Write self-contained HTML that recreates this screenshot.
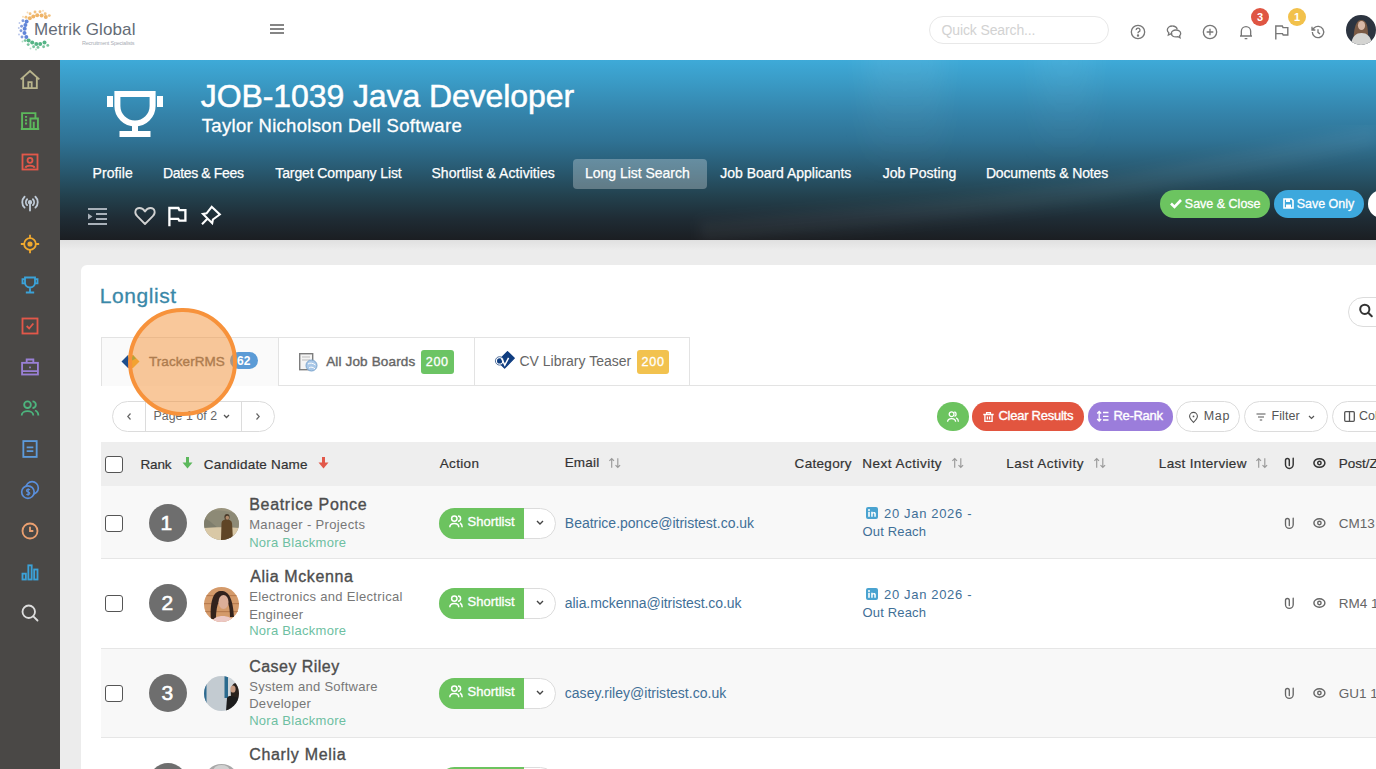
<!DOCTYPE html>
<html><head><meta charset="utf-8">
<style>
*{box-sizing:border-box;margin:0;padding:0}
html,body{width:1376px;height:769px;overflow:hidden;background:#ececec;font-family:"Liberation Sans",sans-serif;position:relative}
.a,.abs{position:absolute}
#side{left:0;top:60px;width:60px;height:709px;background:#4a4846}
.t{position:absolute;white-space:nowrap;line-height:1}
svg{position:absolute;overflow:visible}
</style></head><body>
<div class="a" style="left:0;top:0;width:1376px;height:60px;background:#fff"></div><svg style="left:0;top:0" width="60" height="60" viewBox="0 0 60 60"><circle cx="29.8" cy="18.3" r="2.0" fill="#efb467" opacity="1"/><circle cx="33.3" cy="16.6" r="2.0" fill="#efb467" opacity="1"/><circle cx="37.2" cy="15.3" r="2.0" fill="#efb467" opacity="1"/><circle cx="41.6" cy="15.5" r="2.0" fill="#efb467" opacity="1"/><circle cx="45.8" cy="17.0" r="2.0" fill="#efb467" opacity="1"/><circle cx="30.1" cy="13.7" r="1.45" fill="#f0b86c" opacity="0.85"/><circle cx="35.0" cy="12.0" r="1.45" fill="#f0b86c" opacity="0.85"/><circle cx="40.0" cy="11.7" r="1.45" fill="#f0b86c" opacity="0.85"/><circle cx="45.2" cy="13.8" r="1.45" fill="#f0b86c" opacity="0.85"/><circle cx="49.3" cy="15.6" r="1.45" fill="#f0b86c" opacity="0.85"/><circle cx="26" cy="17.3" r="1.45" fill="#f0b86c" opacity="0.85"/><circle cx="23" cy="16.8" r="0.95" fill="#f0c080" opacity="0.6"/><circle cx="27.5" cy="12.5" r="0.95" fill="#f0c080" opacity="0.6"/><circle cx="43" cy="10.8" r="0.95" fill="#f0c080" opacity="0.6"/><circle cx="26.6" cy="21.4" r="2.0" fill="#5f84d8" opacity="1"/><circle cx="25.4" cy="25.0" r="2.0" fill="#5f84d8" opacity="1"/><circle cx="24.7" cy="28.8" r="2.0" fill="#5f84d8" opacity="1"/><circle cx="24.5" cy="33.0" r="2.0" fill="#5f84d8" opacity="1"/><circle cx="26.3" cy="37.0" r="2.0" fill="#5f84d8" opacity="1"/><circle cx="22.9" cy="20.7" r="1.45" fill="#6a8ad6" opacity="0.85"/><circle cx="21.6" cy="26.2" r="1.45" fill="#6a8ad6" opacity="0.85"/><circle cx="21.0" cy="30.8" r="1.45" fill="#6a8ad6" opacity="0.85"/><circle cx="22.0" cy="37.0" r="1.45" fill="#6a8ad6" opacity="0.85"/><circle cx="18.8" cy="28" r="0.95" fill="#8aa0dc" opacity="0.6"/><circle cx="19" cy="34.5" r="0.95" fill="#8aa0dc" opacity="0.6"/><circle cx="19.5" cy="23" r="0.95" fill="#8aa0dc" opacity="0.6"/><circle cx="28.6" cy="40.4" r="2.0" fill="#55b486" opacity="1"/><circle cx="32.2" cy="42.6" r="2.0" fill="#55b486" opacity="1"/><circle cx="36.3" cy="43.9" r="2.0" fill="#55b486" opacity="1"/><circle cx="40.2" cy="43.9" r="2.0" fill="#55b486" opacity="1"/><circle cx="44.5" cy="42.4" r="2.0" fill="#55b486" opacity="1"/><circle cx="25.2" cy="40.6" r="1.45" fill="#60b88c" opacity="0.85"/><circle cx="28.2" cy="44.6" r="1.45" fill="#60b88c" opacity="0.85"/><circle cx="33.6" cy="46.7" r="1.45" fill="#60b88c" opacity="0.85"/><circle cx="38.0" cy="47.4" r="1.45" fill="#60b88c" opacity="0.85"/><circle cx="43.6" cy="46.7" r="1.45" fill="#60b88c" opacity="0.85"/><circle cx="47.8" cy="45.4" r="1.45" fill="#60b88c" opacity="0.85"/><circle cx="30.5" cy="48.5" r="0.95" fill="#80c8a0" opacity="0.6"/><circle cx="36" cy="49.5" r="0.95" fill="#80c8a0" opacity="0.6"/><circle cx="22.5" cy="41.5" r="0.95" fill="#80c8a0" opacity="0.6"/></svg><div class="t" style="left:33.90px;top:21px;font-size:17px;color:#646b76;letter-spacing:0.117px">Metrik Global</div><div class="t" style="left:82.00px;top:41px;font-size:5.5px;color:#a9aeb5;letter-spacing:-0.227px">Recruitment Specialists</div><div class="a" style="left:270px;top:24px;width:14px;height:2px;background:#858585"></div><div class="a" style="left:270px;top:28px;width:14px;height:2px;background:#858585"></div><div class="a" style="left:270px;top:31.5px;width:14px;height:2px;background:#858585"></div><div class="a" style="left:929px;top:16px;width:180px;height:28px;border:1px solid #e8e8e8;border-radius:14px"></div><div class="t" style="left:941.50px;top:23px;font-size:14px;color:#d2d2d2;letter-spacing:-0.121px">Quick Search...</div><!-- icons -->
  <svg style="left:1130px;top:24px" width="16" height="16" viewBox="0 0 24 24" fill="none" stroke="#777" stroke-width="2"><circle cx="12" cy="12" r="10"/><path d="M9.2 9.2 A2.9 2.9 0 1 1 13 11.9 C12.2 12.4 12 13 12 14"/><circle cx="12" cy="17.3" r="0.8" fill="#777"/></svg>
  <svg style="left:1166px;top:24px" width="16" height="16" viewBox="0 0 24 24" fill="none" stroke="#777" stroke-width="2"><path d="M9.5 3 C5 3 2 5.8 2 9 C2 10.8 2.9 12.2 4.2 13.2 L3.5 16.5 L7 14.8 C7.8 15 8.6 15 9.5 15"/><path d="M15 9 C19 9 22 11.3 22 14.2 C22 15.6 21.4 16.7 20.4 17.6 L21 20.5 L18 19 C17 19.3 16 19.4 15 19.4 C11 19.4 8 17.1 8 14.2 C8 11.3 11 9 15 9 Z"/><path d="M9.5 3 C13 3 16 5 16.8 7.8"/></svg>
  <svg style="left:1202px;top:24px" width="16" height="16" viewBox="0 0 24 24" fill="none" stroke="#777" stroke-width="2"><circle cx="12" cy="12" r="10"/><path d="M12 7 V17 M7 12 H17"/></svg>
  <svg style="left:1238px;top:24px" width="16" height="16" viewBox="0 0 24 24" fill="none" stroke="#777" stroke-width="2"><path d="M5 18 V11 A7 7 0 0 1 19 11 V18 M3 18 H21 M10 22 H14"/></svg>
  <svg style="left:1274px;top:24px" width="16" height="16" viewBox="0 0 16 16" fill="none" stroke="#777" stroke-width="1.4"><path d="M1.8 15.5 V2 H8.3 L9 3.6 H13.8 V11 H9.2 L8.5 9.6 H1.8"/></svg>
  <svg style="left:1310px;top:24px" width="16" height="16" viewBox="0 0 24 24" fill="none" stroke="#777" stroke-width="2"><path d="M3.5 12 A8.5 8.5 0 1 0 6 6 L3 9 M3 4 V9 H8"/><path d="M12 8 V12.5 L15 15"/></svg>
  <div class="abs" style="left:1251px;top:8px;width:18px;height:18px;border-radius:50%;background:#df5543;color:#fff;font-size:11px;font-weight:bold;text-align:center;line-height:18px">3</div>
  <div class="abs" style="left:1288px;top:8px;width:18px;height:18px;border-radius:50%;background:#f2c14b;color:#fff;font-size:11px;font-weight:bold;text-align:center;line-height:18px">1</div>
  <svg style="left:1346px;top:15px" width="30" height="30" viewBox="0 0 30 30"><defs><clipPath id="ha"><circle cx="15" cy="15" r="15"/></clipPath><filter id="hf"><feGaussianBlur stdDeviation="0.5"/></filter></defs><g clip-path="url(#ha)"><rect width="30" height="30" fill="#2c3440"/><g filter="url(#hf)"><path d="M8 30 C7 18 9 5 15 5 C21 5 22 12 22 20 L19 22 L12 22 Z" fill="#7a5a44"/><ellipse cx="15.5" cy="10.5" rx="3.6" ry="4.6" fill="#d8b8a6"/><path d="M5 30 C6 21 10 18 15.5 18 C21 18 25 21 26 30 Z" fill="#d4d4d2"/></g></g></svg>
<!-- SIDEBAR -->
<div id="side" class="abs">
 <svg style="left:20px;top:10px" width="20" height="20" viewBox="0 0 24 24" fill="none" stroke="#b8b48c" stroke-width="2.2" stroke-linejoin="miter"><path d="M0.8 11.2 L12 1.2 L23.2 11.2 M3.8 8.6 V21.8 H20.2 V8.6 M10 21.8 V14.5 H14 V21.8"/></svg>
 <svg style="left:20px;top:51px" width="20" height="20" viewBox="0 0 24 24" fill="none" stroke="#5cb85c" stroke-width="2.3"><path d="M1 21.5 H23 M2.5 21.5 V2.5 H18.5 V9 M12.5 21.5 V9 H21.5 V21.5 M16.5 21.5 V13 M6 7 H8.5 M6 11 H8.5 M6 15 H8.5"/></svg>
 <svg style="left:20px;top:92px" width="20" height="20" viewBox="0 0 24 24" fill="none" stroke="#e2584a" stroke-width="2.2"><rect x="3" y="3" width="18" height="18"/><circle cx="12" cy="10" r="3"/><path d="M6.5 19 C7.5 15.5 16.5 15.5 17.5 19"/></svg>
 <svg style="left:20px;top:133px" width="20" height="20" viewBox="0 0 24 24" fill="none" stroke="#bfcbd8" stroke-width="2.2" stroke-linecap="round"><circle cx="12" cy="11" r="1.5" fill="#bfcbd8"/><path d="M12 13 V21 M8.5 7.5 A5 5 0 0 0 8.5 14.5 M15.5 7.5 A5 5 0 0 1 15.5 14.5 M5.5 4.5 A9 9 0 0 0 5.5 17.5 M18.5 4.5 A9 9 0 0 1 18.5 17.5"/></svg>
 <svg style="left:20px;top:174px" width="20" height="20" viewBox="0 0 24 24" fill="none" stroke="#f0a92e" stroke-width="2.2"><circle cx="12" cy="12" r="7"/><circle cx="12" cy="12" r="2" fill="#f0a92e"/><path d="M12 1 V5 M12 19 V23 M1 12 H5 M19 12 H23"/></svg>
 <svg style="left:20px;top:215px" width="20" height="20" viewBox="0 0 24 24" fill="none" stroke="#3ba2d8" stroke-width="2.2"><path d="M6 3 H18 V9 A6 6 0 0 1 6 9 Z M3 5 H6 V10 H3 Z M18 5 H21 V10 H18 Z M12 15 V20 M7 21 H17"/></svg>
 <svg style="left:20px;top:256px" width="20" height="20" viewBox="0 0 24 24" fill="none" stroke="#e2584a" stroke-width="2.2"><rect x="3" y="3" width="18" height="18"/><path d="M8 12 L11 15 L16 9"/></svg>
 <svg style="left:20px;top:297px" width="20" height="20" viewBox="0 0 24 24" fill="none" stroke="#9a80d6" stroke-width="2.2"><rect x="2.5" y="7" width="19" height="14"/><path d="M8 7 V3 H16 V7 M2.5 17 H21.5"/><rect x="11" y="11.5" width="2" height="2" fill="#9a80d6" stroke="none"/></svg>
 <svg style="left:20px;top:338px" width="20" height="20" viewBox="0 0 24 24" fill="none" stroke="#4db57e" stroke-width="2.2"><circle cx="9" cy="8" r="4"/><path d="M2 21 C2 14 16 14 16 21 M15 4 A4 4 0 0 1 15 12 M18 15 C21 16 22 18 22 21"/></svg>
 <svg style="left:20px;top:379px" width="20" height="20" viewBox="0 0 24 24" fill="none" stroke="#5d9bdc" stroke-width="2.2"><rect x="4" y="2.5" width="16" height="19"/><path d="M8 10 H16 M8 14.5 H16"/></svg>
 <svg style="left:20px;top:420px" width="20" height="20" viewBox="0 0 24 24" fill="none" stroke="#5a8fdc" stroke-width="2"><circle cx="14.5" cy="9.5" r="7.5"/><circle cx="9.5" cy="14.5" r="7.5" fill="#4a4846"/><path d="M11.8 12 C11.3 11 7.8 11 7.8 12.8 C7.8 14.5 11.8 14 11.8 16 C11.8 17.8 8.3 17.8 7.8 16.8 M9.8 10 V19" stroke-width="1.5"/></svg>
 <svg style="left:20px;top:461px" width="20" height="20" viewBox="0 0 24 24" fill="none" stroke="#eba070" stroke-width="2.2"><circle cx="12" cy="12" r="9"/><path d="M12 7 V12 H16"/></svg>
 <svg style="left:20px;top:502px" width="20" height="20" viewBox="0 0 24 24" fill="none" stroke="#3ba2d8" stroke-width="2.2"><rect x="3" y="14" width="4" height="7"/><rect x="10" y="4" width="4" height="17"/><rect x="17" y="9" width="4" height="12"/></svg>
 <svg style="left:20px;top:543px" width="20" height="20" viewBox="0 0 24 24" fill="none" stroke="#dedede" stroke-width="2.2" stroke-linecap="round"><circle cx="10.5" cy="10.5" r="7.5"/><path d="M16 16 L21 21"/></svg>
</div>
<div class="a" style="left:60px;top:60px;width:1316px;height:180px;background:linear-gradient(180deg,#3eaad8 0%,#3a9bc6 12%,#3483aa 30%,#2f7294 45%,#295b73 60%,#23424f 75%,#1f2c35 88%,#1b1e22 100%)"></div><div class="a" style="left:60px;top:60px;width:1316px;height:180px;overflow:hidden"><div class="a" style="left:805px;top:-20px;width:80px;height:140px;filter:blur(14px);background:linear-gradient(180deg,rgba(255,255,255,0.07),rgba(255,255,255,0))"></div><div class="a" style="left:975px;top:-20px;width:60px;height:130px;filter:blur(14px);background:linear-gradient(180deg,rgba(255,255,255,0.06),rgba(255,255,255,0))"></div><svg style="left:0;top:0" width="1316" height="180"><defs><filter id="bl"><feGaussianBlur stdDeviation="6"/></filter></defs><path d="M640 172 C840 155 990 140 1090 120 C1190 100 1260 90 1316 75" fill="none" stroke="rgba(255,255,255,0.045)" stroke-width="22" filter="url(#bl)"/></svg></div><svg style="left:0;top:0" width="1376" height="769" viewBox="0 0 1376 769">
  <g fill="none" stroke="#fff" stroke-width="6"><path d="M117.4 93.9 H152.6 V106 A17.6 17.4 0 0 1 117.4 106 Z"/></g>
  <g fill="#fff"><rect x="132" y="124" width="6" height="8"/><rect x="119.5" y="131" width="31" height="6"/><rect x="107" y="96" width="6" height="11"/><rect x="157" y="96" width="6" height="11"/></g>
  <!-- indent icon -->
  <g fill="#a9b1b9"><rect x="88" y="208" width="19" height="2"/><rect x="96" y="213" width="11" height="2"/><rect x="96" y="218" width="11" height="2"/><rect x="88" y="223" width="19" height="2"/><path d="M88 213.5 L92.5 216.5 L88 219.5 Z"/></g>
  <!-- heart -->
  <path d="M145 224 L137.2 216.2 C134 213 135 208 139.5 208 C142 208 144 209.8 145 211.5 C146 209.8 148 208 150.5 208 C155 208 156 213 152.8 216.2 Z" fill="none" stroke="#d2d2d2" stroke-width="1.8" stroke-linejoin="round"/>
  <!-- flag -->
  <path d="M169.4 226.2 V208 H178.4 L179.4 210.2 H185.4 V220.6 H179.2 L178.2 218.8 H169.4" fill="none" stroke="#fff" stroke-width="2.3"/>
  <!-- pin -->
  <path d="M211.7 206.8 L206.6 213.4 L203 214 L212.2 223.2 L212.9 219.5 L219.8 214.5 Z M202 224.2 L207.6 218.6" fill="none" stroke="#fff" stroke-width="2.1" stroke-linejoin="miter"/>
</svg><div class="t" style="left:200.80px;top:80px;font-size:32px;color:#fff;letter-spacing:-0.091px;-webkit-text-stroke:0.5px #fff">JOB-1039 Java Developer</div><div class="t" style="left:201.80px;top:117px;font-size:18.5px;color:#fff;letter-spacing:0.310px;-webkit-text-stroke:0.3px #fff">Taylor Nicholson Dell Software</div><div class="a" style="left:573px;top:159px;width:134px;height:30px;border-radius:4px;background:rgba(255,255,255,0.28)"></div><div class="t" style="left:92.60px;top:166px;font-size:14px;color:#fff;letter-spacing:0.067px;-webkit-text-stroke:0.25px #fff">Profile</div><div class="t" style="left:163.00px;top:166px;font-size:14px;color:#fff;letter-spacing:-0.355px;-webkit-text-stroke:0.25px #fff">Dates &amp; Fees</div><div class="t" style="left:275.30px;top:166px;font-size:14px;color:#fff;letter-spacing:-0.111px;-webkit-text-stroke:0.25px #fff">Target Company List</div><div class="t" style="left:431.40px;top:166px;font-size:14px;color:#fff;letter-spacing:0.062px;-webkit-text-stroke:0.25px #fff">Shortlist &amp; Activities</div><div class="t" style="left:585.10px;top:166px;font-size:14px;color:#fff;letter-spacing:-0.033px;-webkit-text-stroke:0.25px #fff">Long List Search</div><div class="t" style="left:720.30px;top:166px;font-size:14px;color:#fff;letter-spacing:-0.026px;-webkit-text-stroke:0.25px #fff">Job Board Applicants</div><div class="t" style="left:882.70px;top:166px;font-size:14px;color:#fff;letter-spacing:0.050px;-webkit-text-stroke:0.25px #fff">Job Posting</div><div class="t" style="left:985.90px;top:166px;font-size:14px;color:#fff;letter-spacing:-0.138px;-webkit-text-stroke:0.25px #fff">Documents &amp; Notes</div><div class="a" style="left:1160px;top:190px;width:110px;height:28px;border-radius:14px;background:#6cc460"></div><svg style="left:1170px;top:198px" width="12" height="11" viewBox="0 0 12 11"><path d="M1 5.5 L4.5 9 L11 2" fill="none" stroke="#fff" stroke-width="2.6"/></svg><div class="t" style="left:1184.80px;top:198px;font-size:12.5px;color:#fff;-webkit-text-stroke:0.3px #fff">Save &amp; Close</div><div class="a" style="left:1274px;top:190px;width:90px;height:28px;border-radius:14px;background:#3da8dd"></div><svg style="left:1283px;top:198px" width="11" height="11" viewBox="0 0 11 11"><path d="M1 1 H8.5 L10 2.5 V10 H1 Z" fill="none" stroke="#fff" stroke-width="1.6"/><rect x="3" y="1" width="4" height="3" fill="#fff"/><rect x="3" y="6.5" width="5" height="3.5" fill="#fff"/></svg><div class="t" style="left:1296.80px;top:198px;font-size:12.5px;color:#fff;letter-spacing:-0.037px;-webkit-text-stroke:0.3px #fff">Save Only</div><div class="a" style="left:1368px;top:190px;width:40px;height:28px;border-radius:14px;background:#fff"></div><div class="a" style="left:60px;top:240px;width:1316px;height:10px;background:linear-gradient(180deg,#e0e0e0,#ececec)"></div><div class="a" style="left:81px;top:265px;width:1320px;height:600px;background:#fff;border-radius:6px"></div><div class="t" style="left:99.80px;top:285px;font-size:21px;color:#3a88a8;letter-spacing:0.571px;-webkit-text-stroke:0.3px #3a88a8">Longlist</div><div class="a" style="left:1348px;top:297px;width:60px;height:30px;border:1px solid #dcdcdc;border-radius:15px"></div><svg style="left:1358px;top:303px" width="16" height="16" viewBox="0 0 16 16" fill="none" stroke="#333" stroke-width="2"><circle cx="6.8" cy="6.3" r="4.6"/><path d="M10.2 9.7 L13.8 13.3" stroke-linecap="round"/></svg><div class="a" style="left:278px;top:385px;width:1120px;height:1px;background:#e3e3e3"></div><div class="a" style="left:101px;top:337px;width:178px;height:49px;border:1px solid #e3e3e3;border-bottom:none;background:#fafafa"></div><div class="a" style="left:279px;top:337px;width:196px;height:48px;border-top:1px solid #e3e3e3;border-right:1px solid #e3e3e3;background:#fff"></div><div class="a" style="left:475px;top:337px;width:215px;height:48px;border-top:1px solid #e3e3e3;border-right:1px solid #e3e3e3;background:#fff"></div><svg style="left:121px;top:354px" width="19" height="15" viewBox="0 0 19 15"><path d="M0.5 7.5 L7 1 L9 7.5 L7 14 Z" fill="#1f4e8c"/><path d="M7 14 L9 7.5 L11 14 Z" fill="#c0262d"/><path d="M7 1 L12 1 L18.5 7.5 L12 14 L11 14 L9 7.5 Z" fill="#f2b32a"/><path d="M9 7.5 L12 1 L15 4.5 Z" fill="#6fb43f"/></svg>
<svg style="left:299px;top:353px" width="19" height="18" viewBox="0 0 19 18"><rect x="0.7" y="0.7" width="13" height="16" fill="#f4f4f4" stroke="#7d7d7d" stroke-width="1.4"/><path d="M3 4 H11 M3 7 H11" stroke="#bbb" stroke-width="1"/><circle cx="12.5" cy="12.5" r="5.5" fill="#a9c8e8" stroke="#7ea7cf" stroke-width="1"/><path d="M9 11 C11 9.5 14 10 16.5 12 M10 15 C12 13.5 14 14 16 16" stroke="#fff" stroke-width="1" fill="none"/></svg>
<svg style="left:495px;top:351px" width="20" height="18" viewBox="0 0 20 18"><path d="M12.5 0.6 L19.3 7.2 L9.6 17 L2.8 10.4 Z" fill="#0f3d80" stroke="#0f3d80" stroke-width="1.2" stroke-linejoin="round"/><circle cx="4.6" cy="9.9" r="4.2" fill="#fff" stroke="#2a4f86" stroke-width="0.8"/><circle cx="4.6" cy="9.9" r="2.6" fill="#0f3d80"/><path d="M6.6 7.4 L9.8 14 L13.6 6.8" fill="none" stroke="#fff" stroke-width="1.5"/></svg>
<div class="t" style="left:149.00px;top:355px;font-size:13.5px;color:#666;letter-spacing:0.067px;-webkit-text-stroke:0.4px #666">TrackerRMS</div><div class="a" style="left:230px;top:352px;width:28px;height:17px;border-radius:9px;background:#5b9bd6"></div><div class="t" style="left:237.00px;top:355px;font-size:12px;color:#fff;font-weight:700">62</div><div class="t" style="left:326.20px;top:355px;font-size:13.5px;color:#666;letter-spacing:0.154px;-webkit-text-stroke:0.4px #666">All Job Boards</div><div class="a" style="left:421px;top:350px;width:33px;height:24px;border-radius:3px;background:#6cc464"></div><div class="t" style="left:425.70px;top:356px;font-size:12.6px;color:#fff;letter-spacing:0.700px;-webkit-text-stroke:0.3px #fff">200</div><div class="t" style="left:519.40px;top:354px;font-size:14px;color:#666">CV Library Teaser</div><div class="a" style="left:637px;top:350px;width:32px;height:24px;border-radius:3px;background:#f2c24f"></div><div class="t" style="left:641.50px;top:356px;font-size:12.6px;color:#fff;letter-spacing:0.700px;-webkit-text-stroke:0.3px #fff">200</div><div class="a" style="left:112px;top:401px;width:163px;height:31px;border:1px solid #dcdcdc;border-radius:16px"></div><div class="a" style="left:145px;top:401px;width:1px;height:31px;background:#dcdcdc"></div><div class="a" style="left:241px;top:401px;width:1px;height:31px;background:#dcdcdc"></div><svg style="left:126px;top:412px" width="6" height="9" viewBox="0 0 6 9"><path d="M4.5 1.5 L1.8 4.5 L4.5 7.5" fill="none" stroke="#666" stroke-width="1.2"/></svg><svg style="left:255px;top:412px" width="6" height="9" viewBox="0 0 6 9"><path d="M1.5 1.5 L4.2 4.5 L1.5 7.5" fill="none" stroke="#666" stroke-width="1.2"/></svg><div class="t" style="left:153.50px;top:410px;font-size:12.3px;color:#666;letter-spacing:0.070px">Page 1 of 2</div><svg style="left:223px;top:414px" width="7" height="5" viewBox="0 0 7 5"><path d="M1 1 L3.5 3.5 L6 1" fill="none" stroke="#555" stroke-width="1.3"/></svg><div class="a" style="left:937.2px;top:402px;width:31.4px;height:28.5px;border-radius:50%;background:#6cc35f"></div>
<svg style="left:947px;top:411px" width="12" height="11" viewBox="0 0 12 11" fill="none" stroke="#fff" stroke-width="1.3"><circle cx="4.6" cy="3.2" r="2.4"/><path d="M0.6 10.8 C0.6 6.6 8.6 6.6 8.6 10.8 M7.3 1 A2.2 2.2 0 0 1 7.5 5.3 M9.2 6.8 C10.6 7.5 11.4 8.8 11.4 10.8"/></svg>
<div class="a" style="left:972px;top:402px;width:112px;height:28.5px;border-radius:14.25px;background:#e2553f"></div>
<svg style="left:983px;top:412px" width="11" height="10" viewBox="0 0 11 10" fill="none" stroke="#fff" stroke-width="1.3"><path d="M0.3 2.5 H10.7 M3.6 2.5 V0.7 H7.4 V2.5 M1.9 2.5 V9.4 H9.1 V2.5 M4.4 4.5 V7.5 M6.6 4.5 V7.5"/></svg>
<div class="a" style="left:1088px;top:402px;width:85px;height:28.5px;border-radius:14.25px;background:#9b7ddb"></div>
<svg style="left:1097px;top:411px" width="12" height="11" viewBox="0 0 12 11" fill="none" stroke="#fff" stroke-width="1.3"><path d="M2.2 0.5 V10 M0.2 2.5 L2.2 0.5 L4.2 2.5 M0.2 8 L2.2 10 L4.2 8 M6 1.5 H11.5 M6 5.3 H11.5 M6 9 H11.5"/></svg>
<div class="a" style="left:1176px;top:401px;width:63.5px;height:30.5px;border:1px solid #dcdcdc;border-radius:16px;background:#fff"></div>
<svg style="left:1189px;top:411.7px" width="9" height="11" viewBox="0 0 9 11" fill="none" stroke="#555" stroke-width="1.1"><path d="M4.5 10.4 C1.6 7.6 0.6 5.8 0.6 4.3 A3.9 3.9 0 0 1 8.4 4.3 C8.4 5.8 7.4 7.6 4.5 10.4 Z"/><circle cx="4.5" cy="4.4" r="0.9" fill="#555" stroke="none"/></svg>
<div class="a" style="left:1244.4px;top:401px;width:83.2px;height:30.5px;border:1px solid #dcdcdc;border-radius:16px;background:#fff"></div>
<svg style="left:1256px;top:413px" width="10" height="8" viewBox="0 0 10 8" fill="none" stroke="#555" stroke-width="1.2"><path d="M0.5 1 H9.5 M2 4 H8 M3.8 7 H6.2"/></svg>
<svg style="left:1308px;top:415px" width="7" height="5" viewBox="0 0 7 5"><path d="M1 1 L3.5 3.5 L6 1" fill="none" stroke="#555" stroke-width="1.2"/></svg>
<div class="a" style="left:1332.4px;top:401px;width:90px;height:30.5px;border:1px solid #dcdcdc;border-radius:16px;background:#fff"></div>
<svg style="left:1344px;top:411px" width="11" height="11" viewBox="0 0 11 11" fill="none" stroke="#555" stroke-width="1.3"><rect x="0.7" y="0.7" width="9.6" height="9.6" rx="1"/><path d="M5.5 0.7 V10.3"/></svg>
<div class="t" style="left:998.40px;top:409px;font-size:13px;color:#fff;letter-spacing:-0.250px;-webkit-text-stroke:0.35px #fff">Clear Results</div><div class="t" style="left:1113.40px;top:409px;font-size:13px;color:#fff;letter-spacing:-0.300px;-webkit-text-stroke:0.35px #fff">Re-Rank</div><div class="t" style="left:1203.70px;top:410px;font-size:12.5px;color:#555;letter-spacing:0.700px">Map</div><div class="t" style="left:1271.50px;top:410px;font-size:12.5px;color:#555;letter-spacing:0.100px">Filter</div><div class="t" style="left:1359.00px;top:410px;font-size:12.5px;color:#555">Columns</div><div class="a" style="left:101px;top:442px;width:1300px;height:44px;background:#eeeeee"></div><div class="a" style="left:105px;top:456px;width:18px;height:17px;border:1.3px solid #555;border-radius:3px;background:#fff"></div><div class="t" style="left:140.50px;top:458px;font-size:13.5px;color:#333;letter-spacing:-0.167px;-webkit-text-stroke:0.2px #333">Rank</div><svg style="left:182px;top:457px" width="11" height="12" viewBox="0 0 11 12"><path d="M5.5 0 V7" stroke="#5cb85c" stroke-width="3"/><path d="M0.5 5.5 L5.5 11.5 L10.5 5.5 Z" fill="#5cb85c"/></svg><div class="t" style="left:203.80px;top:458px;font-size:13.5px;color:#333;letter-spacing:0.185px;-webkit-text-stroke:0.2px #333">Candidate Name</div><svg style="left:318px;top:457px" width="11" height="12" viewBox="0 0 11 12"><path d="M5.5 0 V7" stroke="#e2584a" stroke-width="3"/><path d="M0.5 5.5 L5.5 11.5 L10.5 5.5 Z" fill="#e2584a"/></svg><div class="t" style="left:439.80px;top:457px;font-size:13.5px;color:#333;letter-spacing:0.320px;-webkit-text-stroke:0.2px #333">Action</div><div class="t" style="left:564.70px;top:456px;font-size:13.5px;color:#333;letter-spacing:0.175px;-webkit-text-stroke:0.2px #333">Email</div><div class="t" style="left:794.60px;top:457px;font-size:13.5px;color:#333;letter-spacing:0.314px;-webkit-text-stroke:0.2px #333">Category</div><div class="t" style="left:862.30px;top:457px;font-size:13.5px;color:#333;letter-spacing:0.483px;-webkit-text-stroke:0.2px #333">Next Activity</div><div class="t" style="left:1006.20px;top:457px;font-size:13.5px;color:#333;letter-spacing:0.508px;-webkit-text-stroke:0.2px #333">Last Activity</div><div class="t" style="left:1158.80px;top:457px;font-size:13.5px;color:#333;letter-spacing:0.331px;-webkit-text-stroke:0.2px #333">Last Interview</div><div class="t" style="left:1338.70px;top:457px;font-size:13.5px;color:#333;-webkit-text-stroke:0.2px #333">Post/Zip</div><svg style="left:608.8px;top:458px" width="12" height="10" viewBox="0 0 12 10" fill="none" stroke="#9a9a9a" stroke-width="1.15"><path d="M2.7 9.8 V0.5 M0.4 2.8 L2.7 0.5 L5 2.8 M8.8 0.2 V9.5 M6.5 7.2 L8.8 9.5 L11.1 7.2"/></svg>
<svg style="left:951.6px;top:458px" width="12" height="10" viewBox="0 0 12 10" fill="none" stroke="#9a9a9a" stroke-width="1.15"><path d="M2.7 9.8 V0.5 M0.4 2.8 L2.7 0.5 L5 2.8 M8.8 0.2 V9.5 M6.5 7.2 L8.8 9.5 L11.1 7.2"/></svg>
<svg style="left:1093.5px;top:458px" width="12" height="10" viewBox="0 0 12 10" fill="none" stroke="#9a9a9a" stroke-width="1.15"><path d="M2.7 9.8 V0.5 M0.4 2.8 L2.7 0.5 L5 2.8 M8.8 0.2 V9.5 M6.5 7.2 L8.8 9.5 L11.1 7.2"/></svg>
<svg style="left:1255.6px;top:458px" width="12" height="10" viewBox="0 0 12 10" fill="none" stroke="#9a9a9a" stroke-width="1.15"><path d="M2.7 9.8 V0.5 M0.4 2.8 L2.7 0.5 L5 2.8 M8.8 0.2 V9.5 M6.5 7.2 L8.8 9.5 L11.1 7.2"/></svg>
<svg style="left:1284px;top:456.5px" width="11" height="12" viewBox="0 0 11 12" fill="none" stroke="#333" stroke-width="1.45"><path d="M9.2 1.2 V7.6 A3.85 3.85 0 0 1 1.5 7.6 V3.4 A1.9 1.9 0 0 1 5.3 3.4 V8.6" stroke-linecap="round"/></svg>
<svg style="left:1312.5px;top:458px" width="13" height="10" viewBox="0 0 13 10" fill="none" stroke="#333" stroke-width="1.5"><ellipse cx="6.4" cy="5" rx="5.5" ry="4.3"/><circle cx="6.4" cy="5" r="1.7"/></svg>
<div class="a" style="left:101px;top:486px;width:1300px;height:73px;background:#f8f8f8;border-bottom:1px solid #e6e6e6"></div><div class="a" style="left:105px;top:514.5px;width:18px;height:17px;border:1.3px solid #555;border-radius:3px;background:#fff"></div><div class="a" style="left:149px;top:504px;width:38px;height:38px;border-radius:50%;background:#6e6e6e"></div><div class="t" style="left:160.50px;top:512px;font-size:21px;color:#fff;-webkit-text-stroke:0.6px #fff">1</div><svg style="left:204px;top:508px" width="35" height="32" viewBox="0 0 35 32"><defs><clipPath id="c1"><ellipse cx="17.5" cy="16" rx="17.5" ry="16"/></clipPath><filter id="f1"><feGaussianBlur stdDeviation="0.6"/></filter></defs><g clip-path="url(#c1)"><rect width="35" height="32" fill="#9a947e"/><g filter="url(#f1)"><path d="M0 4 C8 1 20 2 35 6 V20 C25 18 10 20 0 22 Z" fill="#8d8a76"/><path d="M0 10 C6 12 10 18 18 22 L0 24 Z" fill="#7e7d6c"/><path d="M0 20 C10 19 25 19 35 20 V32 H0 Z" fill="#d9c8a6"/><path d="M17 32 L17.5 15 C18 10 27 10 28 15 L29 32 Z" fill="#5e4527"/><ellipse cx="23" cy="9" rx="2.6" ry="3" fill="#4a3a2a"/><ellipse cx="23.3" cy="9.8" rx="1.8" ry="2" fill="#b08a6a"/></g></g></svg>
<div class="t" style="left:249.20px;top:497px;font-size:16px;color:#4d4d4d;letter-spacing:0.692px;-webkit-text-stroke:0.35px #4d4d4d">Beatrice Ponce</div><div class="t" style="left:249.20px;top:518px;font-size:13px;color:#777;letter-spacing:0.353px">Manager - Projects</div><div class="t" style="left:249.20px;top:536px;font-size:13px;color:#6ebfa2;letter-spacing:0.277px">Nora Blackmore</div><div class="a" style="left:439px;top:507.5px;width:117px;height:31px;border:1px solid #dcdcdc;border-radius:16px;background:#fff"></div><div class="a" style="left:439px;top:507.5px;width:85px;height:31px;border-radius:16px 0 0 16px;background:#6cc35f"></div><svg style="left:449px;top:515px" width="14" height="13" viewBox="0 0 14 13" fill="none" stroke="#fff" stroke-width="1.5"><circle cx="5.3" cy="3.6" r="2.7"/><path d="M0.8 12.3 C0.8 7.3 9.8 7.3 9.8 12.3 M9 1 A2.6 2.6 0 0 1 9 6.2 M11 8 C12.5 8.8 13.2 10 13.2 12.3"/></svg><div class="t" style="left:467.50px;top:515px;font-size:13px;color:#fff;letter-spacing:0.025px;-webkit-text-stroke:0.3px #fff">Shortlist</div><svg style="left:535.5px;top:520px" width="8" height="5" viewBox="0 0 8 5"><path d="M1 1 L4 4 L7 1" fill="none" stroke="#444" stroke-width="1.4"/></svg><div class="t" style="left:564.80px;top:516px;font-size:14px;color:#3f6f97">Beatrice.ponce@itristest.co.uk</div><svg style="left:866px;top:507.0px" width="12" height="12" viewBox="0 0 12 12"><rect width="12" height="12" rx="2" fill="#4aa3d0"/><rect x="2.2" y="4.8" width="1.6" height="5" fill="#fff"/><circle cx="3" cy="3" r="1" fill="#fff"/><path d="M5.2 9.8 V4.8 H6.7 V5.6 C7.2 4.6 9.8 4.4 9.8 6.6 V9.8 H8.3 V7 C8.3 5.8 6.7 5.9 6.7 7 V9.8 Z" fill="#fff"/></svg><div class="t" style="left:884.00px;top:507px;font-size:13px;color:#3f6f97;letter-spacing:0.667px">20 Jan 2026 -</div><div class="t" style="left:862.60px;top:525px;font-size:13px;color:#3f6f97;letter-spacing:0.150px">Out Reach</div><svg style="left:1284px;top:517px" width="11" height="12" viewBox="0 0 11 12" fill="none" stroke="#666" stroke-width="1.35"><path d="M9.2 1.2 V7.6 A3.85 3.85 0 0 1 1.5 7.6 V3.4 A1.9 1.9 0 0 1 5.3 3.4 V8.6" stroke-linecap="round"/></svg><svg style="left:1312.5px;top:518px" width="13" height="10" viewBox="0 0 13 10" fill="none" stroke="#666" stroke-width="1.4"><ellipse cx="6.4" cy="5" rx="5.5" ry="4.2"/><circle cx="6.4" cy="5" r="1.7"/></svg><div class="t" style="left:1338.70px;top:517px;font-size:13.5px;color:#666">CM13 1XX</div><div class="a" style="left:101px;top:559px;width:1300px;height:90px;background:#ffffff;border-bottom:1px solid #e6e6e6"></div><div class="a" style="left:105px;top:594.5px;width:18px;height:17px;border:1.3px solid #555;border-radius:3px;background:#fff"></div><div class="a" style="left:149px;top:584px;width:38px;height:38px;border-radius:50%;background:#6e6e6e"></div><div class="t" style="left:161.50px;top:592px;font-size:21px;color:#fff;-webkit-text-stroke:0.6px #fff">2</div>
<svg style="left:204px;top:586.5px" width="35" height="35" viewBox="0 0 35 35"><defs><clipPath id="c2"><circle cx="17.5" cy="17.5" r="17.5"/></clipPath><filter id="f2"><feGaussianBlur stdDeviation="0.7"/></filter></defs><g clip-path="url(#c2)"><rect width="35" height="35" fill="#d49a6a"/><g filter="url(#f2)"><rect x="0" y="8" width="35" height="1.2" fill="#b87c50"/><rect x="0" y="16" width="35" height="1.2" fill="#b87c50"/><rect x="0" y="24" width="35" height="1.2" fill="#b87c50"/><path d="M7 32 C6 18 8 5 16 4 C24 3 29 10 30 30 L26 30 C26 20 24 12 19 10 C14 12 12 22 12 32 Z" fill="#33241f"/><ellipse cx="19.5" cy="15" rx="5" ry="7" fill="#dcae98"/><path d="M8 35 C10 27 27 27 30 35 Z" fill="#ecc8c4"/></g></g></svg>
<div class="t" style="left:250.20px;top:569px;font-size:16px;color:#4d4d4d;letter-spacing:0.600px;-webkit-text-stroke:0.35px #4d4d4d">Alia Mckenna</div><div class="t" style="left:249.20px;top:590px;font-size:13px;color:#777;letter-spacing:0.320px">Electronics and Electrical</div><div class="t" style="left:249.20px;top:608px;font-size:13px;color:#777;letter-spacing:0.255px">Engineer</div><div class="t" style="left:249.20px;top:624px;font-size:13px;color:#6ebfa2;letter-spacing:0.277px">Nora Blackmore</div><div class="a" style="left:439px;top:587.5px;width:117px;height:31px;border:1px solid #dcdcdc;border-radius:16px;background:#fff"></div><div class="a" style="left:439px;top:587.5px;width:85px;height:31px;border-radius:16px 0 0 16px;background:#6cc35f"></div><svg style="left:449px;top:595px" width="14" height="13" viewBox="0 0 14 13" fill="none" stroke="#fff" stroke-width="1.5"><circle cx="5.3" cy="3.6" r="2.7"/><path d="M0.8 12.3 C0.8 7.3 9.8 7.3 9.8 12.3 M9 1 A2.6 2.6 0 0 1 9 6.2 M11 8 C12.5 8.8 13.2 10 13.2 12.3"/></svg><div class="t" style="left:467.50px;top:595px;font-size:13px;color:#fff;letter-spacing:0.025px;-webkit-text-stroke:0.3px #fff">Shortlist</div><svg style="left:535.5px;top:600px" width="8" height="5" viewBox="0 0 8 5"><path d="M1 1 L4 4 L7 1" fill="none" stroke="#444" stroke-width="1.4"/></svg><div class="t" style="left:564.80px;top:596px;font-size:14px;color:#3f6f97;letter-spacing:-0.059px">alia.mckenna@itristest.co.uk</div><svg style="left:866px;top:588.0px" width="12" height="12" viewBox="0 0 12 12"><rect width="12" height="12" rx="2" fill="#4aa3d0"/><rect x="2.2" y="4.8" width="1.6" height="5" fill="#fff"/><circle cx="3" cy="3" r="1" fill="#fff"/><path d="M5.2 9.8 V4.8 H6.7 V5.6 C7.2 4.6 9.8 4.4 9.8 6.6 V9.8 H8.3 V7 C8.3 5.8 6.7 5.9 6.7 7 V9.8 Z" fill="#fff"/></svg><div class="t" style="left:884.00px;top:588px;font-size:13px;color:#3f6f97;letter-spacing:0.667px">20 Jan 2026 -</div><div class="t" style="left:862.60px;top:606px;font-size:13px;color:#3f6f97;letter-spacing:0.150px">Out Reach</div><svg style="left:1284px;top:597px" width="11" height="12" viewBox="0 0 11 12" fill="none" stroke="#666" stroke-width="1.35"><path d="M9.2 1.2 V7.6 A3.85 3.85 0 0 1 1.5 7.6 V3.4 A1.9 1.9 0 0 1 5.3 3.4 V8.6" stroke-linecap="round"/></svg><svg style="left:1312.5px;top:598px" width="13" height="10" viewBox="0 0 13 10" fill="none" stroke="#666" stroke-width="1.4"><ellipse cx="6.4" cy="5" rx="5.5" ry="4.2"/><circle cx="6.4" cy="5" r="1.7"/></svg><div class="t" style="left:1338.70px;top:597px;font-size:13.5px;color:#666">RM4 1AB</div><div class="a" style="left:101px;top:649px;width:1300px;height:89px;background:#f8f8f8;border-bottom:1px solid #e6e6e6"></div><div class="a" style="left:105px;top:684.5px;width:18px;height:17px;border:1.3px solid #555;border-radius:3px;background:#fff"></div><div class="a" style="left:149px;top:674px;width:38px;height:38px;border-radius:50%;background:#6e6e6e"></div><div class="t" style="left:161.50px;top:682px;font-size:21px;color:#fff;-webkit-text-stroke:0.6px #fff">3</div>
<svg style="left:204px;top:676px" width="35" height="35" viewBox="0 0 35 35"><defs><clipPath id="c3"><circle cx="17.5" cy="17.5" r="17.5"/></clipPath><filter id="f3"><feGaussianBlur stdDeviation="0.6"/></filter></defs><g clip-path="url(#c3)"><rect width="35" height="35" fill="#c3cbd1"/><g filter="url(#f3)"><rect x="0" width="2.5" height="35" fill="#2d6b90"/><rect x="20.5" y="0" width="3.5" height="22" fill="#2a6a8e"/><rect x="24" y="0" width="11" height="35" fill="#d0d6da"/><path d="M22 35 L23 22 C24 19 33 19 35 21 V35 Z" fill="#1e1e1e"/><path d="M27 20 C26 13 28 7 32 7 C36 7 37 14 36 22 Z" fill="#2a221e"/><ellipse cx="29" cy="13" rx="2.6" ry="3.6" fill="#c89c82"/></g></g></svg>
<div class="t" style="left:249.20px;top:659px;font-size:16px;color:#4d4d4d;letter-spacing:0.460px;-webkit-text-stroke:0.35px #4d4d4d">Casey Riley</div><div class="t" style="left:249.20px;top:680px;font-size:13px;color:#777;letter-spacing:0.267px">System and Software</div><div class="t" style="left:249.20px;top:697px;font-size:13px;color:#777;letter-spacing:0.287px">Developer</div><div class="t" style="left:249.20px;top:714px;font-size:13px;color:#6ebfa2;letter-spacing:0.277px">Nora Blackmore</div><div class="a" style="left:439px;top:677.5px;width:117px;height:31px;border:1px solid #dcdcdc;border-radius:16px;background:#fff"></div><div class="a" style="left:439px;top:677.5px;width:85px;height:31px;border-radius:16px 0 0 16px;background:#6cc35f"></div><svg style="left:449px;top:685px" width="14" height="13" viewBox="0 0 14 13" fill="none" stroke="#fff" stroke-width="1.5"><circle cx="5.3" cy="3.6" r="2.7"/><path d="M0.8 12.3 C0.8 7.3 9.8 7.3 9.8 12.3 M9 1 A2.6 2.6 0 0 1 9 6.2 M11 8 C12.5 8.8 13.2 10 13.2 12.3"/></svg><div class="t" style="left:467.50px;top:685px;font-size:13px;color:#fff;letter-spacing:0.025px;-webkit-text-stroke:0.3px #fff">Shortlist</div><svg style="left:535.5px;top:690px" width="8" height="5" viewBox="0 0 8 5"><path d="M1 1 L4 4 L7 1" fill="none" stroke="#444" stroke-width="1.4"/></svg><div class="t" style="left:564.80px;top:686px;font-size:14px;color:#3f6f97;letter-spacing:0.015px">casey.riley@itristest.co.uk</div><svg style="left:1284px;top:687px" width="11" height="12" viewBox="0 0 11 12" fill="none" stroke="#666" stroke-width="1.35"><path d="M9.2 1.2 V7.6 A3.85 3.85 0 0 1 1.5 7.6 V3.4 A1.9 1.9 0 0 1 5.3 3.4 V8.6" stroke-linecap="round"/></svg><svg style="left:1312.5px;top:688px" width="13" height="10" viewBox="0 0 13 10" fill="none" stroke="#666" stroke-width="1.4"><ellipse cx="6.4" cy="5" rx="5.5" ry="4.2"/><circle cx="6.4" cy="5" r="1.7"/></svg><div class="t" style="left:1338.70px;top:687px;font-size:13.5px;color:#666">GU1 1TX</div><div class="a" style="left:101px;top:738px;width:1300px;height:90px;background:#ffffff;border-bottom:1px solid #e6e6e6"></div><div class="a" style="left:105px;top:773.5px;width:18px;height:17px;border:1.3px solid #555;border-radius:3px;background:#fff"></div><div class="a" style="left:149px;top:763px;width:38px;height:38px;border-radius:50%;background:#6e6e6e"></div><div class="t" style="left:162.50px;top:772px;font-size:21px;color:#fff;-webkit-text-stroke:0.6px #fff">4</div>
<svg style="left:204px;top:764px" width="35" height="35" viewBox="0 0 35 35"><defs><clipPath id="c4"><circle cx="17.5" cy="17.5" r="17.5"/></clipPath></defs><g clip-path="url(#c4)"><rect width="35" height="35" fill="#a8a8a8"/><ellipse cx="17.5" cy="6" rx="8" ry="5" fill="#d0d0d0"/></g></svg>
<div class="t" style="left:249.20px;top:747px;font-size:16px;color:#4d4d4d;letter-spacing:0.682px;-webkit-text-stroke:0.35px #4d4d4d">Charly Melia</div><div class="t" style="left:249.20px;top:768px;font-size:13px;color:#777;letter-spacing:0.232px">Software Engineer</div><div class="t" style="left:249.20px;top:786px;font-size:13px;color:#6ebfa2;letter-spacing:0.277px">Nora Blackmore</div><div class="a" style="left:439px;top:766.5px;width:117px;height:31px;border:1px solid #dcdcdc;border-radius:16px;background:#fff"></div><div class="a" style="left:439px;top:766.5px;width:85px;height:31px;border-radius:16px 0 0 16px;background:#6cc35f"></div><svg style="left:449px;top:774px" width="14" height="13" viewBox="0 0 14 13" fill="none" stroke="#fff" stroke-width="1.5"><circle cx="5.3" cy="3.6" r="2.7"/><path d="M0.8 12.3 C0.8 7.3 9.8 7.3 9.8 12.3 M9 1 A2.6 2.6 0 0 1 9 6.2 M11 8 C12.5 8.8 13.2 10 13.2 12.3"/></svg><div class="t" style="left:467.50px;top:774px;font-size:13px;color:#fff;letter-spacing:0.025px;-webkit-text-stroke:0.3px #fff">Shortlist</div><svg style="left:535.5px;top:779px" width="8" height="5" viewBox="0 0 8 5"><path d="M1 1 L4 4 L7 1" fill="none" stroke="#444" stroke-width="1.4"/></svg><div class="t" style="left:564.80px;top:776px;font-size:14px;color:#3f6f97">charly.melia@itristest.co.uk</div><svg style="left:1284px;top:776px" width="11" height="12" viewBox="0 0 11 12" fill="none" stroke="#666" stroke-width="1.35"><path d="M9.2 1.2 V7.6 A3.85 3.85 0 0 1 1.5 7.6 V3.4 A1.9 1.9 0 0 1 5.3 3.4 V8.6" stroke-linecap="round"/></svg><svg style="left:1312.5px;top:777px" width="13" height="10" viewBox="0 0 13 10" fill="none" stroke="#666" stroke-width="1.4"><ellipse cx="6.4" cy="5" rx="5.5" ry="4.2"/><circle cx="6.4" cy="5" r="1.7"/></svg><div class="t" style="left:1338.70px;top:776px;font-size:13.5px;color:#666">SW1 2AB</div><div class="a" style="left:128.3px;top:308.1px;width:108.3px;height:108.3px;border-radius:50%;border:4.5px solid #f7923b;background:rgba(244,145,56,0.5)"></div>
</body></html>
